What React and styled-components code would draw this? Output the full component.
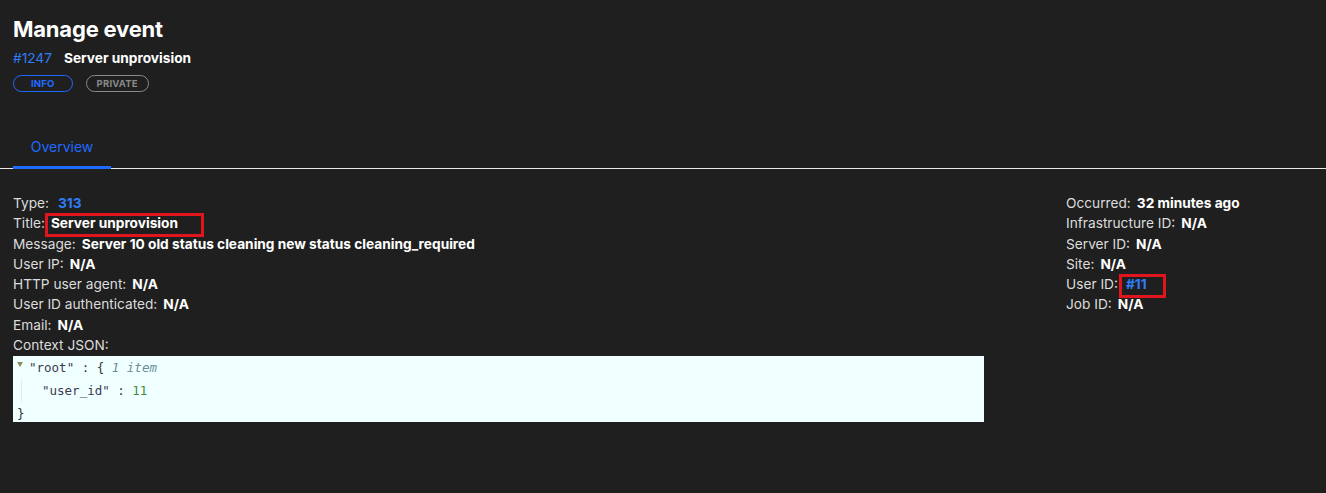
import React from "react";
import styled, { createGlobalStyle } from "styled-components";

const Global = createGlobalStyle`
  html, body {
    margin: 0;
    padding: 0;
    background: #1f1f1f;
  }
  body {
    font-family: "Inter", "Noto Sans", sans-serif;
    color: #e6e6e6;
  }
`;

const Page = styled.div`
  min-height: 493px;
  background: #1f1f1f;
`;

const Header = styled.div`
  padding: 14px 13px 0;
`;

const Title = styled.h1`
  margin: 0;
  font-size: 22px;
  font-weight: 700;
  color: #fff;
  line-height: 30px;
  letter-spacing: -0.2px;
`;

const SubRow = styled.div`
  display: flex;
  align-items: center;
  gap: 12px;
  margin-top: 5px;
  font-size: 13.7px;
  line-height: 18px;
`;

const EventId = styled.span`
  color: #2f7df6;
`;

const EventName = styled.span`
  color: #fff;
  font-weight: 700;
`;

const Badges = styled.div`
  display: flex;
  gap: 13px;
  margin-top: 8px;
`;

const Badge = styled.span`
  display: inline-flex;
  align-items: center;
  justify-content: center;
  height: 17px;
  box-sizing: border-box;
  padding: 0 ${(p) => p.$px}px;
  border-radius: 9px;
  border: 1px solid ${(p) => p.$color};
  color: ${(p) => p.$color};
  font-size: 9.5px;
  font-weight: 700;
  letter-spacing: 0.2px;
`;

const Tabs = styled.div`
  margin-top: 37px;
  padding: 0 13px;
  border-bottom: 1px solid #e8e8e8;
  display: flex;
`;

const Tab = styled.div`
  width: 98px;
  height: 40px;
  box-sizing: border-box;
  display: flex;
  align-items: center;
  justify-content: center;
  padding-bottom: 3px;
  color: #1f6bff;
  font-size: 14px;
  border-bottom: 3px solid #1f6bff;
  margin-bottom: -1px;
`;

const Body = styled.div`
  display: flex;
  padding: 24px 13px 0;
`;

const LeftCol = styled.div`
  width: 971px;
`;

const RightCol = styled.div`
  margin-left: 82px;
  flex: 1;
`;

const Row = styled.div`
  font-size: 13.7px;
  line-height: 20.3px;
  color: #dcdcdc;
  white-space: nowrap;
`;

const Value = styled.span`
  position: relative;
  margin-left: ${(p) => p.$gap}px;
  color: ${(p) => (p.$link ? "#2f7df6" : "#fff")};
  font-weight: 700;
`;

const Mark = styled.span`
  position: absolute;
  left: ${(p) => p.$l}px;
  top: -2px;
  width: ${(p) => p.$w}px;
  height: 24px;
  box-sizing: border-box;
  border: 3px solid #e0151d;
  pointer-events: none;
`;

const JsonBox = styled.div`
  margin-top: 1px;
  background: #f0ffff;
  height: 66px;
  padding: 0 4px;
  font-family: "DejaVu Sans Mono", "Liberation Mono", monospace;
  font-size: 12.5px;
  color: #333;
`;

const JsonLine = styled.div`
  display: flex;
  align-items: center;
  height: 23px;
  padding-left: ${(p) => p.$indent}px;
  border-left: ${(p) => (p.$guide ? "1px solid #dfeeee" : "none")};
  margin-left: ${(p) => (p.$guide ? 4 : 0)}px;
  gap: 6px;
`;

const Caret = styled.span`
  width: 0;
  height: 0;
  border-left: 3.5px solid transparent;
  border-right: 3.5px solid transparent;
  border-top: 5px solid #8a8a5a;
  margin-top: -6px;
`;

const Key = styled.span`
  color: #3b3b4f;
`;

const Muted = styled.span`
  color: #6d8f9a;
  font-style: italic;
`;

const Num = styled.span`
  color: #3e8e3e;
`;

const leftRows = [
  ["Type:", "313", { link: true, gap: 9 }],
  ["Title:", "Server unprovision", { mark: { l: -6, w: 159 } }],
  ["Message:", "Server 10 old status cleaning new status cleaning_required"],
  ["User IP:", "N/A"],
  ["HTTP user agent:", "N/A"],
  ["User ID authenticated:", "N/A"],
  ["Email:", "N/A"],
];

const rightRows = [
  ["Occurred:", "32 minutes ago"],
  ["Infrastructure ID:", "N/A"],
  ["Server ID:", "N/A"],
  ["Site:", "N/A"],
  ["User ID:", "#11", { link: true, gap: 8, mark: { l: -7, w: 47 } }],
  ["Job ID:", "N/A"],
];

const Field = ({ label, value, opts = {} }) => (
  <Row>
    {label}
    <Value $link={opts.link} $gap={opts.gap || 6}>
      {value}
      {opts.mark && <Mark $l={opts.mark.l} $w={opts.mark.w} />}
    </Value>
  </Row>
);

export default function App() {
  return (
    <Page>
      <Global />
      <Header>
        <Title>Manage event</Title>
        <SubRow>
          <EventId>#1247</EventId>
          <EventName>Server unprovision</EventName>
        </SubRow>
        <Badges>
          <Badge $color="#1f6bff" $px={17}>INFO</Badge>
          <Badge $color="#8a8a8a" $px={10}>PRIVATE</Badge>
        </Badges>
      </Header>
      <Tabs>
        <Tab>Overview</Tab>
      </Tabs>
      <Body>
        <LeftCol>
          {leftRows.map(([l, v, o]) => (
            <Field key={l} label={l} value={v} opts={o} />
          ))}
          <Row>Context JSON:</Row>
          <JsonBox>
            <JsonLine $indent={0}>
              <Caret />
              <span>
                <Key>"root"</Key> : {"{"} <Muted>1 item</Muted>
              </span>
            </JsonLine>
            <JsonLine $indent={20} $guide>
              <span>
                <Key>"user_id"</Key> : <Num>11</Num>
              </span>
            </JsonLine>
            <JsonLine $indent={0}>{"}"}</JsonLine>
          </JsonBox>
        </LeftCol>
        <RightCol>
          {rightRows.map(([l, v, o]) => (
            <Field key={l} label={l} value={v} opts={o} />
          ))}
        </RightCol>
      </Body>
    </Page>
  );
}
